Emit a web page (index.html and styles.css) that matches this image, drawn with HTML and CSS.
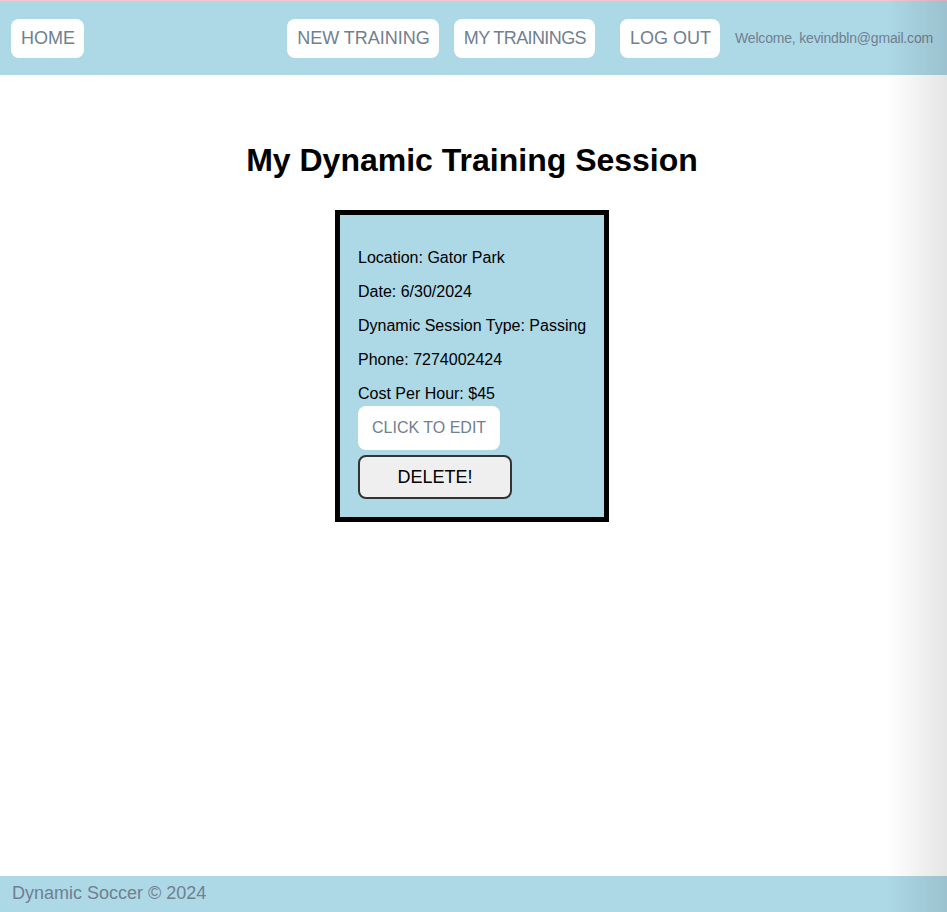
FILE: index.html
```html
<!DOCTYPE html>
<html lang="en">
<head>
<meta charset="utf-8">
<title>My Dynamic Training Session</title>
<link rel="stylesheet" href="styles.css">
</head>
<body>
<header class="navbar">
  <a class="nav-btn" href="#">HOME</a>
  <div class="nav-right">
    <a class="nav-btn" href="#">NEW TRAINING</a>
    <a class="nav-btn narrow" href="#">MY TRAININGS</a>
    <a class="nav-btn logout" href="#">LOG OUT</a>
    <span class="welcome">Welcome, kevindbln@gmail.com</span>
  </div>
</header>
<main class="main">
  <h1 class="title">My Dynamic Training Session</h1>
  <div class="card">
    <p class="line">Location: Gator Park</p>
    <p class="line">Date: 6/30/2024</p>
    <p class="line">Dynamic Session Type: Passing</p>
    <p class="line">Phone: 7274002424</p>
    <p class="line">Cost Per Hour: $45</p>
    <a class="edit-btn" href="#">CLICK TO EDIT</a>
    <button class="delete-btn" type="button">DELETE!</button>
  </div>
</main>
<footer class="footer">Dynamic Soccer © 2024</footer>
<div class="edge-shade"></div>
</body>
</html>
```
FILE: styles.css
```css
html, body {
  margin: 0;
  padding: 0;
}
body {
  font-family: "Liberation Sans", Arial, sans-serif;
  min-height: 100vh;
  display: flex;
  flex-direction: column;
  background: #fff;
  color: #000;
}
.navbar {
  border-top: 1px solid #f2c4cc;
  background: #add8e6;
  height: 74px;
  display: flex;
  align-items: center;
  justify-content: space-between;
  padding: 0 14px 0 11px;
}
.nav-right {
  display: flex;
  align-items: center;
  gap: 15px;
}
.nav-btn {
  display: block;
  background: #fff;
  color: #708090;
  text-decoration: none;
  font-size: 18px;
  line-height: 21px;
  padding: 9px 9px 9px 10px;
  border-radius: 8px;
}
.narrow {
  letter-spacing: -0.6px;
}
.logout {
  margin-left: 10px;
}
.welcome {
  font-size: 14px;
  color: #708090;
  letter-spacing: -0.18px;
}
.main {
  flex: 1;
  display: flex;
  flex-direction: column;
  align-items: center;
  padding-right: 3px;
}
.title {
  font-size: 32px;
  line-height: 37px;
  font-weight: bold;
  margin: 67px 0 31px;
}
.card {
  width: 228px;
  border: 5px solid #000;
  background: #add8e6;
  padding: 18px;
  display: flex;
  flex-direction: column;
  align-items: flex-start;
}
.line {
  margin: 16px 0 0;
  font-size: 16px;
  line-height: 18px;
  white-space: nowrap;
}
.edit-btn {
  margin-top: 3px;
  background: #fff;
  color: #708090;
  text-decoration: none;
  font-size: 16px;
  line-height: 18px;
  padding: 13px 14px;
  border-radius: 8px;
}
.delete-btn {
  margin-top: 5px;
  width: 154px;
  height: 44px;
  font-family: "Liberation Sans", Arial, sans-serif;
  font-size: 18px;
  color: #000;
  background: #efefef;
  border: 2px solid #333;
  border-radius: 8px;
  padding: 0;
}
.footer {
  background: #add8e6;
  color: #708090;
  font-size: 18px;
  height: 36px;
  line-height: 34px;
  padding: 0 12px;
}
.edge-shade {
  position: fixed;
  top: 0;
  right: 0;
  bottom: 0;
  width: 60px;
  pointer-events: none;
  background: linear-gradient(to right, rgba(0,0,0,0), rgba(0,0,0,0.1));
}
```
